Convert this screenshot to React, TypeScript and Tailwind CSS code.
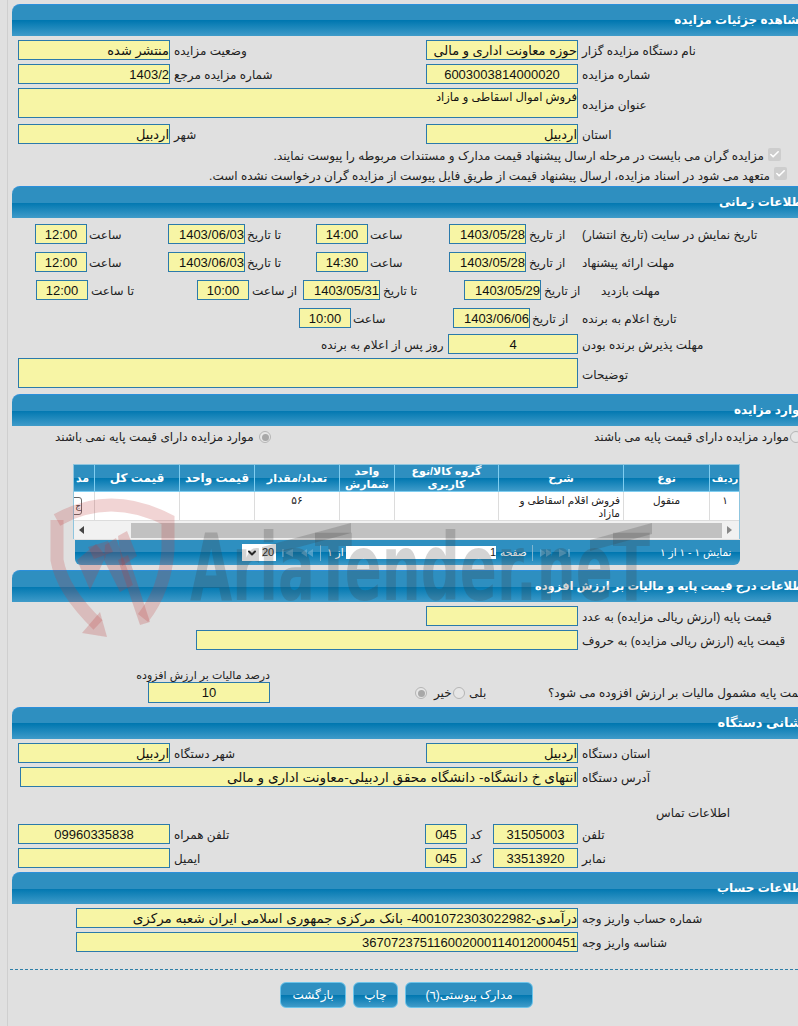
import type { ReactNode } from "react"
import { Check, ChevronDown } from "lucide-react"

const bar = "bg-[linear-gradient(to_bottom,#2e8fc0_0%,#2e8fc0_50%,#0077b0_50%,#3f9bc9_100%)]"

function Header({ title, size = "text-[12px]" }: { title: string; size?: string }) {
  return (
    <div className={`ml-[12px] flex h-[32px] w-[800px] items-end justify-end rounded-tl-lg border-t border-[#2b8fdb] pr-[5px] ${bar}`}>
      <span dir="rtl" className={`mb-[7px] whitespace-nowrap font-bold text-white ${size}`}>{title}</span>
    </div>
  )
}

function Box({ className = "", children }: { className?: string; children?: ReactNode }) {
  return (
    <div dir="rtl" className={`shrink-0 overflow-hidden whitespace-nowrap border border-[#2b7aab] bg-[#f7f5a5] text-[13px] leading-[19px] text-[#111] ${className}`}>
      {children}
    </div>
  )
}

function Lbl({ className = "", children }: { className?: string; children: ReactNode }) {
  return (
    <div dir="rtl" className={`shrink-0 whitespace-nowrap text-left text-[12px] leading-[22px] text-[#222] ${className}`}>
      {children}
    </div>
  )
}

function Row({ className = "", children }: { className?: string; children: ReactNode }) {
  return <div className={`flex h-[20px] ${className}`}>{children}</div>
}

function Checked() {
  return (
    <div className="flex h-[13px] w-[13px] shrink-0 items-center justify-center rounded-[2px] bg-[#cdcdcd]">
      <Check size={11} strokeWidth={3.5} className="text-white" />
    </div>
  )
}

function Radio({ on = false, className = "" }: { on?: boolean; className?: string }) {
  return (
    <div className={`flex h-[12px] w-[12px] shrink-0 items-center justify-center rounded-full border border-[#b5b5b5] bg-[#e6e6e6] ${className}`}>
      {on && <div className="h-[7px] w-[7px] rounded-full bg-[#a8a8a8]" />}
    </div>
  )
}

function HeadCell({ size = "justify-center text-[11px]", children }: { size?: string; children: ReactNode }) {
  return (
    <div dir="rtl" className={`flex items-center overflow-hidden border-r border-[#7fcdf0] px-[2px] text-center font-bold leading-[13px] text-white ${size}`}>
      {children}
    </div>
  )
}

function Cell({ className = "", children }: { className?: string; children?: ReactNode }) {
  return (
    <div dir="rtl" className={`overflow-hidden border-r border-[#dcdcdc] px-[3px] pt-[2px] text-center text-[10.5px] leading-[13px] text-[#222] ${className}`}>
      {children}
    </div>
  )
}

function Btn({ className = "", children }: { className?: string; children: ReactNode }) {
  return (
    <div dir="rtl" className={`flex h-[26px] items-center justify-center rounded-md border border-[#6cc4ea] text-[12px] text-white ${bar} ${className}`}>
      {children}
    </div>
  )
}

function PagerText({ className = "", children }: { className?: string; children: ReactNode }) {
  return (
    <div dir="rtl" className={`shrink-0 whitespace-nowrap text-left text-[10.5px] text-white ${className}`}>
      {children}
    </div>
  )
}

// faded first/prev/next/last arrows of the grid pager
function PagerArrow({ d, className = "" }: { d: string; className?: string }) {
  return (
    <svg viewBox="0 0 12 8" className={`h-[8px] w-[12px] shrink-0 opacity-70 ${className}`}>
      <path d={d} fill="#6fb0d2" />
    </svg>
  )
}

function Watermark() {
  return (
    <svg viewBox="40 490 640 160" className="pointer-events-none absolute left-[40px] top-[490px] h-[160px] w-[640px]">
      <g fill="none" stroke="#be3c3c" strokeOpacity="0.22" strokeWidth="13">
        <path d="M57 520 Q110 490 168 520 L168 550 Q165 590 143 618" />
        <path d="M57 520 L57 560 Q62 590 98 625" />
      </g>
      <g fill="#be3c3c" fillOpacity="0.24">
        <polygon points="100,612 107,637 82,633" />
        <polygon points="118,536 127,531 137,556 122,566" />
        <polygon points="105,545 116,538 133,585 120,592 104,560" />
        <polygon points="94,559 88,547 108,541 113,552" />
        <polygon points="77,560 96,544 106,556 90,590" />
        <polygon points="118,560 128,555 150,622 140,625" />
      </g>
      <g fill="#3c3c3c" fillOpacity="0.22">
        <polygon points="262,547 351,523 351,533 262,557" />
        <polygon points="590,540 652,523 652,534 590,551" />
        <text x="190" y="600" fontFamily="DejaVu Sans" fontWeight="700" fontSize="92" textLength="460" lengthAdjust="spacingAndGlyphs">AriaTender.neT</text>
      </g>
    </svg>
  )
}

export default function App() {
  return (
    <div className="relative h-[1026px] w-[798px] overflow-hidden bg-[#e0e0e0] font-['Liberation_Sans','DejaVu_Sans',sans-serif]">
      <div className="absolute bottom-0 left-[7px] top-0 w-px bg-[#cfcfcf]" />
      <div className="w-[812px] pt-[4px]">
        <Header title="مشاهده جزئیات مزایده" />
        <Row className="mt-[4px] pl-[18px]">
          <Box className="w-[152px] text-right">منتشر شده</Box>
          <Lbl className="ml-[4px] w-[252px]">وضعیت مزایده</Lbl>
          <Box className="w-[152px] text-right">حوزه معاونت اداری و مالی</Box>
          <Lbl className="ml-[4px]">نام دستگاه مزایده گزار</Lbl>
        </Row>
        <Row className="mt-[4px] pl-[18px]">
          <Box className="w-[152px] text-right">1403/2</Box>
          <Lbl className="ml-[4px] w-[252px]">شماره مزایده مرجع</Lbl>
          <Box className="w-[152px] text-center">6003003814000020</Box>
          <Lbl className="ml-[4px]">شماره مزایده</Lbl>
        </Row>
        <div className="mt-[4px] flex h-[30px] pl-[18px]">
          <Box className="w-[560px] text-right">
            <span className="block text-[11.5px] leading-[16px]">فروش اموال اسقاطی و مازاد</span>
          </Box>
          <Lbl className="ml-[4px] mt-[6px]">عنوان مزایده</Lbl>
        </div>
        <Row className="mt-[6px] pl-[18px]">
          <Box className="w-[152px] text-right">اردبیل</Box>
          <Lbl className="ml-[4px] w-[252px]">شهر</Lbl>
          <Box className="w-[152px] text-right">اردبیل</Box>
          <Lbl className="ml-[4px]">استان</Lbl>
        </Row>
        <div className="flex h-[21px] w-[781px] items-center justify-end">
          <Lbl className="mr-[4px] mt-[2px]">مزایده گران می بایست در مرحله ارسال پیشنهاد قیمت مدارک و مستندات مربوطه را پیوست نمایند.</Lbl>
          <Checked />
        </div>
        <div className="flex h-[21px] w-[787px] items-center justify-end pb-[4px]">
          <Lbl className="mr-[4px] mt-[4px]">متعهد می شود در اسناد مزایده، ارسال پیشنهاد قیمت از طریق فایل پیوست از مزایده گران درخواست نشده است.</Lbl>
          <Checked />
        </div>

        <Header title="اطلاعات زمانی" />
        <Row className="mt-[6px] pl-[35px]">
          <Box className="w-[52px] text-center">12:00</Box>
          <Lbl className="ml-[2px] w-[79px]">ساعت</Lbl>
          <Box className="w-[77px] text-right">1403/06/03</Box>
          <Lbl className="ml-[2px] w-[69px]">تا تاریخ</Lbl>
          <Box className="w-[52px] text-center">14:00</Box>
          <Lbl className="ml-[2px] w-[79px]">ساعت</Lbl>
          <Box className="w-[77px] text-right">1403/05/28</Box>
          <Lbl className="ml-[3px] w-[53px]">از تاریخ</Lbl>
          <Lbl>تاریخ نمایش در سایت (تاریخ انتشار)</Lbl>
        </Row>
        <Row className="mt-[8px] pl-[35px]">
          <Box className="w-[52px] text-center">12:00</Box>
          <Lbl className="ml-[2px] w-[79px]">ساعت</Lbl>
          <Box className="w-[77px] text-right">1403/06/03</Box>
          <Lbl className="ml-[2px] w-[69px]">تا تاریخ</Lbl>
          <Box className="w-[52px] text-center">14:30</Box>
          <Lbl className="ml-[2px] w-[79px]">ساعت</Lbl>
          <Box className="w-[77px] text-right">1403/05/28</Box>
          <Lbl className="ml-[3px] w-[53px]">از تاریخ</Lbl>
          <Lbl>مهلت ارائه پیشنهاد</Lbl>
        </Row>
        <Row className="mt-[8px] pl-[36px]">
          <Box className="w-[52px] text-center">12:00</Box>
          <Lbl className="ml-[3px] w-[106px]">تا ساعت</Lbl>
          <Box className="w-[52px] text-center">10:00</Box>
          <Lbl className="ml-[3px] w-[51px]">از ساعت</Lbl>
          <Box className="w-[77px] text-right">1403/05/31</Box>
          <Lbl className="ml-[3px] w-[81px]">تا تاریخ</Lbl>
          <Box className="w-[77px] text-right">1403/05/29</Box>
          <Lbl className="ml-[3px] w-[57px]">از تاریخ</Lbl>
          <Lbl>مهلت بازدید</Lbl>
        </Row>
        <Row className="mt-[8px] pl-[299px]">
          <Box className="w-[52px] text-center">10:00</Box>
          <Lbl className="ml-[2px] w-[100px]">ساعت</Lbl>
          <Box className="w-[77px] text-right">1403/06/06</Box>
          <Lbl className="ml-[2px] w-[50px]">از تاریخ</Lbl>
          <Lbl>تاریخ اعلام به برنده</Lbl>
        </Row>
        <Row className="mt-[6px] pl-[321px]">
          <Lbl className="w-[127px]">روز پس از اعلام به برنده</Lbl>
          <Box className="w-[130px] text-center">4</Box>
          <Lbl className="ml-[4px]">مهلت پذیرش برنده بودن</Lbl>
        </Row>
        <div className="mt-[4px] flex h-[30px] pl-[18px]">
          <Box className="w-[560px]" />
          <Lbl className="ml-[4px] mt-[6px]">توضیحات</Lbl>
        </div>

        <div className="mt-[6px]">
          <Header title="موارد مزایده" />
        </div>
        <div className="mt-[1px] flex h-[20px] items-center pl-[55px]">
          <Lbl className="w-[204px]">موارد مزایده دارای قیمت پایه نمی باشند</Lbl>
          <Radio on />
          <Lbl className="ml-[323px] w-[196px]">موارد مزایده دارای قیمت پایه می باشند</Lbl>
          <Radio />
        </div>

        <div className="ml-[73px] mt-[17px] w-[667px] border-x border-t border-[#8fc5de]">
          <div className={`grid h-[27px] grid-cols-[21px_85px_75px_85px_55px_104px_125px_86px_30px] border-b border-[#7fcdf0] ${bar}`}>
            <HeadCell size="justify-end text-[11px]">مد</HeadCell>
            <HeadCell size="justify-center whitespace-nowrap text-[12px]">قیمت کل</HeadCell>
            <HeadCell size="justify-center whitespace-nowrap text-[12px]">قیمت واحد</HeadCell>
            <HeadCell>تعداد/مقدار</HeadCell>
            <HeadCell>واحد شمارش</HeadCell>
            <HeadCell>گروه کالا/نوع کاربری</HeadCell>
            <HeadCell>شرح</HeadCell>
            <HeadCell>نوع</HeadCell>
            <div dir="rtl" className="flex items-center justify-center whitespace-nowrap text-[10px] font-bold text-white">ردیف</div>
          </div>
          <div className="grid h-[29px] grid-cols-[21px_85px_75px_85px_55px_104px_125px_86px_30px] border-b border-[#dcdcdc] bg-white">
            <div className="overflow-hidden border-r border-[#dcdcdc] pt-[5px]">
              <div className="-ml-[10px] flex h-[18px] w-[18px] items-center justify-end rounded-[3px] border border-[#666] bg-white text-[9px] leading-none text-[#222]">ج</div>
            </div>
            <Cell />
            <Cell />
            <Cell>۵۶</Cell>
            <Cell />
            <Cell />
            <Cell className="text-right">فروش اقلام اسقاطی و مازاد</Cell>
            <Cell>منقول</Cell>
            <div className="pt-[2px] text-center text-[10.5px] leading-[13px] text-[#222]">۱</div>
          </div>
          <div className="flex h-[18px] items-center bg-[#f1f1f1]">
            <div className="ml-[5px] h-0 w-0 border-y-[4px] border-r-[5px] border-y-transparent border-r-[#444]" />
            <div className="ml-[47px] h-[15px] w-[591px] bg-[#c1c1c1]" />
            <div className="ml-[5px] h-0 w-0 border-y-[4px] border-l-[5px] border-y-transparent border-l-[#888]" />
          </div>
        </div>
        <div className={`ml-[75px] mt-[1px] flex h-[25px] w-[665px] items-center rounded-b-md ${bar}`}>
          <div className="ml-[167px] flex h-[17px] w-[34px] items-center bg-white pl-[4px] text-[11px] text-[#222]">
            <ChevronDown size={12} strokeWidth={4} />
            <span className="ml-[4px]">20</span>
          </div>
          <PagerArrow className="ml-[6px]" d="M0 0h2v8H0zM11 0v8L3 4z" />
          <PagerArrow className="ml-[7px]" d="M6 0v8L0 4zM12 0v8L6 4z" />
          <div className="ml-[7px] h-[16px] w-px bg-[#7fb5d0]" />
          <PagerText className="ml-[6px] w-[19px]">از ۱</PagerText>
          <div dir="rtl" className="h-[13px] w-[150px] shrink-0 bg-white text-right text-[11px] leading-[13px] text-[#222]">1</div>
          <PagerText className="ml-[4px] w-[32px]">صفحه</PagerText>
          <div className="h-[16px] w-px bg-[#7fb5d0]" />
          <PagerArrow className="ml-[7px]" d="M0 0v8l6-4zM6 0v8l6-4z" />
          <PagerArrow className="ml-[7px]" d="M0 0v8l8-4zM9 0h2v8H9z" />
          <PagerText className="ml-[89px]">نمایش ۱ - ۱ از ۱</PagerText>
        </div>

        <div className="mt-[5px]">
          <Header title="اطلاعات درج قیمت پایه و مالیات بر ارزش افزوده" size="text-[11.5px]" />
        </div>
        <Row className="mt-[4px] pl-[426px]">
          <Box className="w-[152px]" />
          <Lbl className="ml-[4px]">قیمت پایه (ارزش ریالی مزایده) به عدد</Lbl>
        </Row>
        <Row className="mt-[4px] pl-[196px]">
          <Box className="w-[382px]" />
          <Lbl className="ml-[4px]">قیمت پایه (ارزش ریالی مزایده) به حروف</Lbl>
        </Row>
        <div className="flex h-[57px] items-end pb-[4px] pl-[135px]">
          <div className="flex w-[135px] flex-col items-end">
            <div dir="rtl" className="whitespace-nowrap text-[11px] leading-[13px] text-[#222]">درصد مالیات بر ارزش افزوده</div>
            <Box className="w-[122px] text-center">10</Box>
          </div>
          <div className="flex h-[20px] items-center">
            <Radio on className="ml-[145px]" />
            <Lbl className="ml-[7px] w-[19px]">خیر</Lbl>
            <Radio />
            <Lbl className="ml-[4px] w-[79px]">بلی</Lbl>
            <Lbl>قیمت پایه مشمول مالیات بر ارزش افزوده می شود؟</Lbl>
          </div>
        </div>

        <Header title="نشانی دستگاه" size="text-[13px]" />
        <Row className="mt-[4px] pl-[18px]">
          <Box className="w-[152px] text-right">اردبیل</Box>
          <Lbl className="ml-[4px] w-[252px]">شهر دستگاه</Lbl>
          <Box className="w-[152px] text-right">اردبیل</Box>
          <Lbl className="ml-[4px]">استان دستگاه</Lbl>
        </Row>
        <Row className="mt-[4px] pl-[20px]">
          <Box className="w-[558px] text-right">
            <span className="text-[13.6px]">انتهای خ دانشگاه- دانشگاه محقق اردبیلی-معاونت اداری و مالی</span>
          </Box>
          <Lbl className="ml-[4px]">آدرس دستگاه</Lbl>
        </Row>
        <Lbl className="ml-[656px] mt-[15px]">اطلاعات تماس</Lbl>
        <Row className="pl-[18px]">
          <Box className="w-[152px] text-center">09960335838</Box>
          <Lbl className="ml-[4px] w-[251px]">تلفن همراه</Lbl>
          <Box className="w-[42px] text-center">045</Box>
          <Lbl className="ml-[3px] w-[23px]">کد</Lbl>
          <Box className="w-[85px] text-center">31505003</Box>
          <Lbl className="ml-[4px]">تلفن</Lbl>
        </Row>
        <Row className="mt-[4px] pl-[18px]">
          <Box className="w-[152px]" />
          <Lbl className="ml-[4px] w-[251px]">ایمیل</Lbl>
          <Box className="w-[42px] text-center">045</Box>
          <Lbl className="ml-[3px] w-[23px]">کد</Lbl>
          <Box className="w-[85px] text-center">33513920</Box>
          <Lbl className="ml-[4px]">نمابر</Lbl>
        </Row>

        <div className="mt-[4px]">
          <Header title="اطلاعات حساب" />
        </div>
        <Row className="mt-[4px] pl-[76px]">
          <Box className="w-[502px] text-right">
            <span className="text-[13.5px]">درآمدی-4001072303022982- بانک مرکزی جمهوری اسلامی ایران شعبه مرکزی</span>
          </Box>
          <Lbl className="ml-[4px]">شماره حساب واریز وجه</Lbl>
        </Row>
        <Row className="mt-[4px] pl-[76px]">
          <Box className="w-[502px] text-right">367072375116002000114012000451</Box>
          <Lbl className="ml-[4px]">شناسه واریز وجه</Lbl>
        </Row>

        <div className="ml-[10px] mt-[17px] w-[788px] border-t border-dashed border-[#2e7fa8]" />
        <div className="ml-[280px] mt-[12px] flex gap-[7px]">
          <Btn className="w-[66px]">بازگشت</Btn>
          <Btn className="w-[45px]">چاپ</Btn>
          <Btn className="w-[128px]">مدارک پیوستی(٦)</Btn>
        </div>
      </div>
      <Watermark />
    </div>
  )
}
